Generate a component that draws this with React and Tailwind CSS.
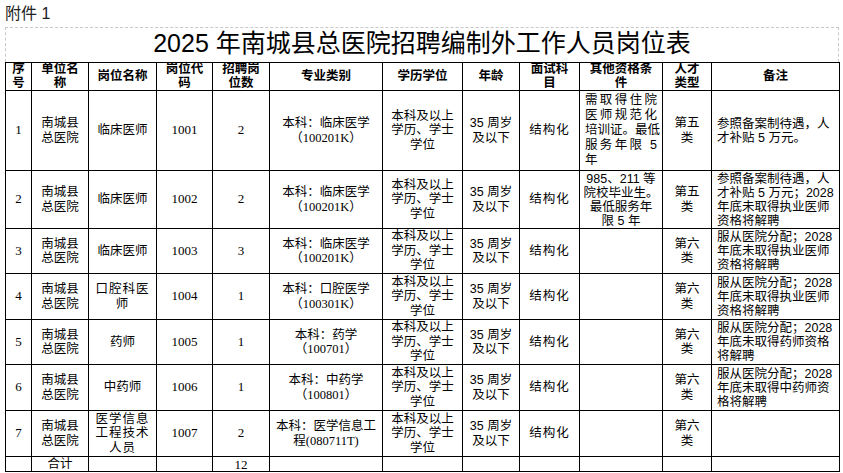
import React from 'react';

const sans = "font-['Liberation_Sans','Noto_Sans_CJK_SC',sans-serif]";
const serif = "font-['Liberation_Serif','Noto_Sans_CJK_SC',serif]";

const cols = [
  'w-[26px]', 'w-[57px]', 'w-[68px]', 'w-[56px]', 'w-[57px]', 'w-[113px]',
  'w-[80px]', 'w-[57px]', 'w-[60px]', 'w-[83px]', 'w-[49px]', 'w-[128px]',
];

const headers = [
  ['序', '号'], ['单位名', '称'], ['岗位名称'], ['岗位代', '码'], ['招聘岗', '位数'],
  ['专业类别'], ['学历学位'], ['年龄'], ['面试科', '目'], ['其他资格条', '件'], ['人才', '类型'], ['备注'],
];

const rows = [
  {
    h: 'h-[80px]', no: '1', name: ['临床医师'], code: '1001', num: '2',
    major: ['本科：临床医学', '（100201K）'],
    other: { lines: ['需取得住院', '医师规范化', '培训证。最低', '服务年限 5', '年'], justify: true },
    type: '第五', remark: ['参照备案制待遇，人', '才补贴 5 万元。'],
  },
  {
    h: 'h-[58px]', no: '2', name: ['临床医师'], code: '1002', num: '2',
    major: ['本科：临床医学', '（100201K）'],
    other: { lines: ['985、211 等', '院校毕业生。', '最低服务年', '限 5 年'] },
    type: '第五', remark: ['参照备案制待遇，人', '才补贴 5 万元；2028', '年底未取得执业医师', '资格将解聘'],
  },
  {
    h: 'h-[45px]', no: '3', name: ['临床医师'], code: '1003', num: '3',
    major: ['本科：临床医学', '（100201K）'],
    type: '第六', remark: ['服从医院分配；2028', '年底未取得执业医师', '资格将解聘'],
  },
  {
    h: 'h-[46px]', no: '4', name: ['口腔科医', '师'], code: '1004', num: '1',
    major: ['本科：口腔医学', '（100301K）'],
    type: '第六', remark: ['服从医院分配；2028', '年底未取得执业医师', '资格将解聘'],
  },
  {
    h: 'h-[45px]', no: '5', name: ['药师'], code: '1005', num: '1',
    major: ['本科：药学', '（100701）'],
    type: '第六', remark: ['服从医院分配；2028', '年底未取得药师资格', '将解聘'],
  },
  {
    h: 'h-[46px]', no: '6', name: ['中药师'], code: '1006', num: '1',
    major: ['本科：中药学', '（100801）'],
    type: '第六', remark: ['服从医院分配；2028', '年底未取得中药师资', '格将解聘'],
  },
  {
    h: 'h-[46px]', no: '7', name: ['医学信息', '工程技术', '人员'], code: '1007', num: '2',
    major: ['本科：医学信息工', '程(080711T)'],
    type: '第六', remark: [],
  },
];

const cell = 'border border-black p-0 text-center align-middle';

const Lines = ({ lines }) => (
  <>
    {lines.map((l, i) => (
      <div key={i} className="whitespace-nowrap">{l}</div>
    ))}
  </>
);

const App = () => {
  return (
    <div className={`w-[843px] h-[473px] bg-white overflow-hidden text-black ${sans}`}>
      <div className="h-[27px] pl-[5px] pt-[4px] text-[16px] leading-[19px] text-[#222]">附件 1</div>
      <div className="ml-[5px] w-[834px] h-[35px] border-t border-l border-r border-dashed border-[#c8c8c8] flex items-center justify-center pb-[4px] text-[25px] leading-[28px]">
        2025 年南城县总医院招聘编制外工作人员岗位表
      </div>
      <table className="ml-[5px] w-[835px] table-fixed border-collapse text-[12.5px] leading-[14.5px]">
        <colgroup>
          {cols.map((c, i) => <col key={i} className={c} />)}
        </colgroup>
        <thead>
          <tr className="h-[28px]">
            {headers.map((h, i) => (
              <th key={i} className={`${cell} font-bold text-[12.5px] leading-[13.5px]`}>
                <Lines lines={h} />
              </th>
            ))}
          </tr>
        </thead>
        <tbody>
          {rows.map((r) => (
            <tr key={r.no} className={r.h}>
              <td className={`${cell} ${serif} text-[13px]`}>{r.no}</td>
              <td className={cell}><Lines lines={['南城县', '总医院']} /></td>
              <td className={`${cell} ${r.name.length > 1 ? 'tracking-[1px]' : ''}`}><Lines lines={r.name} /></td>
              <td className={`${cell} ${serif} text-[13px]`}>{r.code}</td>
              <td className={`${cell} ${serif} text-[13px]`}>{r.num}</td>
              <td className={cell}>
                <div className="whitespace-nowrap">{r.major[0]}</div>
                <div className={`whitespace-nowrap ${serif}`}>{r.major[1]}</div>
              </td>
              <td className={cell}><Lines lines={['本科及以上', '学历、学士', '学位']} /></td>
              <td className={cell}><Lines lines={['35 周岁', '及以下']} /></td>
              <td className={`${cell} tracking-[1px]`}>结构化</td>
              <td className={cell}>
                {r.other && r.other.justify && (
                  <div className="px-[5px] leading-[15px]">
                    {r.other.lines.map((l, i) => (
                      <div key={i} className={`whitespace-nowrap ${i < r.other.lines.length - 1 ? '[text-align-last:justify] text-justify' : 'text-left'}`}>{l}</div>
                    ))}
                  </div>
                )}
                {r.other && !r.other.justify && (
                  <div className="leading-[14px]"><Lines lines={r.other.lines} /></div>
                )}
              </td>
              <td className={cell}><Lines lines={[r.type, '类']} /></td>
              <td className={`${cell} text-left pl-[5px] leading-[14px]`}>
                <Lines lines={r.remark} />
              </td>
            </tr>
          ))}
          <tr className="h-[15px]">
            <td className={cell}></td>
            <td className={`${cell} leading-[13px]`}>合计</td>
            <td className={cell}></td>
            <td className={cell}></td>
            <td className={`${cell} ${serif} text-[13px] leading-[13px]`}>12</td>
            <td className={cell}></td>
            <td className={cell}></td>
            <td className={cell}></td>
            <td className={cell}></td>
            <td className={cell}></td>
            <td className={cell}></td>
            <td className={cell}></td>
          </tr>
        </tbody>
      </table>
    </div>
  );
};

export default App;
